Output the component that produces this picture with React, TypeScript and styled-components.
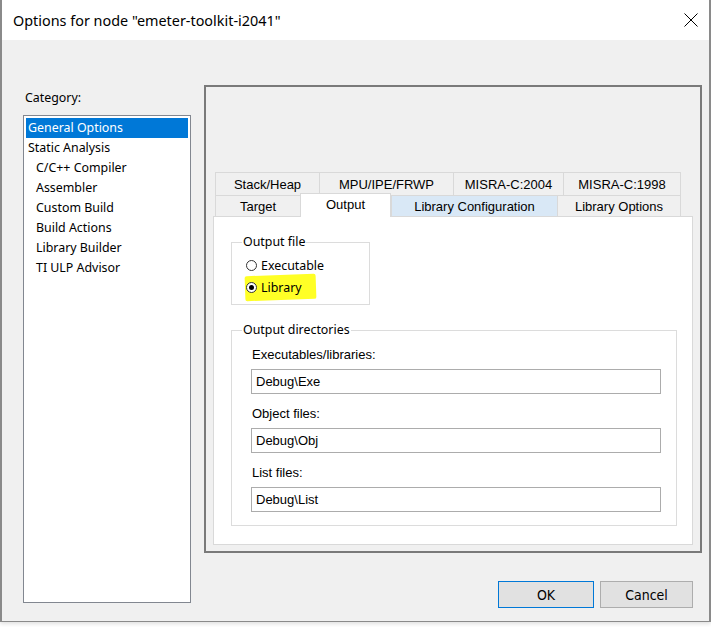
import styled, { createGlobalStyle } from "styled-components";

const UI = '"Noto Sans", "Open Sans", sans-serif';
const SANS = '"Liberation Sans", Arial, sans-serif';

const Global = createGlobalStyle`
  html, body {
    margin:0;
    padding:0;
    background:#ffffff;
  }
  body {
    width:711px;
    height:627px;
    overflow:hidden;
  }
`;

const Window = styled.div`
  width:707px;
  height:621px;
  border-left:2px solid #8a8a8a;
  border-right:2px solid #8a8a8a;
  border-bottom:1px solid #8a8a8a;
  background:#f0f0f0;
  display:flex;
  flex-direction:column;
  box-shadow:0 2px 4px rgba(0,0,0,0.12);
`;

const TitleBar = styled.div`
  height:40px;
  flex-shrink:0;
  background:#ffffff;
  display:flex;
  align-items:center;
  padding-left:11px;
  font-family:${UI};
  font-size:14.4px;
  color:#000;

  >.close {
    margin-left:auto;
    margin-right:11px;
    display:flex;
  }
`;

const Body = styled.div`
  flex:1;
  display:grid;
  grid-template-columns:168px 498px;
  column-gap:13px;
  padding:45px 7px 0 21px;
`;

const LeftCol = styled.div`
  display:flex;
  flex-direction:column;
`;

const CategoryLabel = styled.div`
  margin-top:5px;
  padding-left:2px;
  line-height:16px;
  font-family:${UI};
  font-size:12.4px;
  color:#000;
`;

const ListBox = styled.div`
  margin-top:9px;
  height:488px;
  box-sizing:border-box;
  border:1px solid #828790;
  background:#fff;
  padding:2px;
`;

const ListItem = styled.div<{ $indent?: boolean; $selected?: boolean }>`
  height:20px;
  line-height:20px;
  padding-left:${p => p.$indent ? 10 : 2}px;
  font-family:${UI};
  font-size:12.4px;
  background:${p => p.$selected ? "#0078d7" : "transparent"};
  color:${p => p.$selected ? "#fff" : "#000"};
  white-space:nowrap;
`;

const RightCol = styled.div`
  display:flex;
  flex-direction:column;
`;

const Panel = styled.div`
  height:468px;
  box-sizing:border-box;
  border:2px solid #7a7a7a;
  padding-top:85px;
  display:flex;
  flex-direction:column;
`;

const TabStrip = styled.div`
  margin-left:9px;
  width:466px;
  display:flex;
  flex-direction:column;
`;

const TabRow = styled.div<{ $h: number }>`
  display:flex;
  height:${p => p.$h}px;
`;

const Tab = styled.div<{ $w: number; $active?: boolean; $hot?: boolean; $last?: boolean }>`
  flex-shrink:0;
  width:${p => p.$w}px;
  box-sizing:border-box;
  border-top:1px solid #d9d9d9;
  border-left:1px solid #d9d9d9;
  border-right:${p => p.$last || p.$active ? "1px solid #d9d9d9" : "none"};
  background:${p => p.$active ? "#fff" : p.$hot ? "#d9e8f6" : "#f0f0f0"};
  display:flex;
  align-items:center;
  justify-content:center;
  font-family:${SANS};
  font-size:13px;
  color:#000;
  white-space:nowrap;
  position:relative;
  z-index:${p => p.$active ? 2 : 0};
  margin-top:${p => p.$active ? -2 : 0}px;
  height:${p => p.$active ? "calc(100% + 3px)" : "100%"};
  padding-bottom:${p => p.$active ? 3 : 0}px;
  padding-top:${p => p.$active ? 0 : 1}px;
`;

const Content = styled.div`
  margin-left:7px;
  width:480px;
  height:329px;
  box-sizing:border-box;
  border:1px solid #d9d9d9;
  background:#fff;
  padding:17px 0 0 17px;
  display:flex;
  flex-direction:column;
`;

const Group = styled.fieldset<{ $w: number }>`
  margin:0;
  padding:0;
  width:${p => p.$w}px;
  box-sizing:border-box;
  border:1px solid #dcdcdc;

  &+& {
    margin-top:17px;
  }

  >legend {
    margin-left:10px;
    padding:0 1px;
    line-height:16px;
    font-family:${UI};
    font-size:12.4px;
    color:#000;
  }
`;

const RadioList = styled.div`
  padding:4px 0 6px 14px;
  display:flex;
  flex-direction:column;
`;

const RadioRow = styled.div<{ $marked?: boolean }>`
  height:22px;
  display:flex;
  align-items:center;
  gap:4px;
  font-family:${UI};
  font-size:12.4px;
  color:#000;
  position:relative;
  align-self:flex-start;

  &::before {
    content:"";
    display:${p => p.$marked ? "block" : "none"};
    position:absolute;
    left:-1px;
    top:-1px;
    width:71px;
    height:25px;
    background:#ffff26;
    border-radius:2px;
    transform:rotate(-2deg);
  }

  >* {
    position:relative;
  }
`;

const Radio = styled.span<{ $checked?: boolean }>`
  width:11px;
  height:11px;
  box-sizing:border-box;
  border-radius:50%;
  border:1px solid #333;
  background:#fff;
  display:flex;
  align-items:center;
  justify-content:center;

  &::after {
    content:"";
    width:5px;
    height:5px;
    border-radius:50%;
    background:#000;
    display:${p => p.$checked ? "block" : "none"};
  }
`;

const Fields = styled.div`
  padding:9px 15px 13px 19px;
  display:flex;
  flex-direction:column;
`;

const FieldLabel = styled.div`
  padding-left:1px;
  line-height:16px;
  font-family:${SANS};
  font-size:13px;
  color:#000;
  margin-bottom:6px;

  &:not(:first-child) {
    margin-top:12px;
  }
`;

const PathInput = styled.input`
  width:410px;
  height:25px;
  box-sizing:border-box;
  border:1px solid #acacac;
  padding:0 4px;
  margin:0;
  font-family:${SANS};
  font-size:13px;
  color:#000;
  background:#fff;
  outline:none;
`;

const ButtonRow = styled.div`
  margin-top:28px;
  padding-right:9px;
  display:flex;
  justify-content:flex-end;
  gap:6px;
`;

const Button = styled.button<{ $w: number; $default?: boolean }>`
  width:${p => p.$w}px;
  height:27px;
  margin:0;
  padding:0;
  border:1px solid ${p => p.$default ? "#0078d7" : "#adadad"};
  background:#e1e1e1;
  font-family:"DejaVu Sans Condensed", "DejaVu Sans", sans-serif;
  font-stretch:condensed;
  font-size:14px;
  color:#000;
`;

const categories = [
  { name: "General Options", indent: false },
  { name: "Static Analysis", indent: false },
  { name: "C/C++ Compiler", indent: true },
  { name: "Assembler", indent: true },
  { name: "Custom Build", indent: true },
  { name: "Build Actions", indent: true },
  { name: "Library Builder", indent: true },
  { name: "TI ULP Advisor", indent: true },
];

const backTabs = [
  { name: "Stack/Heap", w: 104 },
  { name: "MPU/IPE/FRWP", w: 134 },
  { name: "MISRA-C:2004", w: 110 },
  { name: "MISRA-C:1998", w: 118 },
];

const frontTabs = [
  { name: "Target", w: 85 },
  { name: "Output", w: 91, active: true },
  { name: "Library Configuration", w: 166, hot: true },
  { name: "Library Options", w: 124 },
];

const dirs = [
  { label: "Executables/libraries:", value: "Debug\\Exe" },
  { label: "Object files:", value: "Debug\\Obj" },
  { label: "List files:", value: "Debug\\List" },
];

const App = () => {
  return (<>
    <Global />
    <Window>
      <TitleBar>
        Options for node "emeter-toolkit-i2041"
        <span className="close">
          <svg width="14" height="14" viewBox="0 0 14 14">
            <path d="M0.5 0.5 L13.5 13.5 M13.5 0.5 L0.5 13.5" stroke="#000" strokeWidth="1" />
          </svg>
        </span>
      </TitleBar>
      <Body>
        <LeftCol>
          <CategoryLabel>Category:</CategoryLabel>
          <ListBox>
            {categories.map((c, i) => (
              <ListItem key={c.name} $indent={c.indent} $selected={i == 0}>{c.name}</ListItem>
            ))}
          </ListBox>
        </LeftCol>
        <RightCol>
          <Panel>
            <TabStrip>
              <TabRow $h={23}>
                {backTabs.map((t, i) => (
                  <Tab key={t.name} $w={t.w} $last={i == backTabs.length - 1}>{t.name}</Tab>
                ))}
              </TabRow>
              <TabRow $h={21}>
                {frontTabs.map((t, i) => (
                  <Tab key={t.name} $w={t.w} $active={t.active} $hot={t.hot} $last={i == frontTabs.length - 1}>{t.name}</Tab>
                ))}
              </TabRow>
            </TabStrip>
            <Content>
              <Group $w={139}>
                <legend>Output file</legend>
                <RadioList>
                  <RadioRow><Radio />Executable</RadioRow>
                  <RadioRow $marked><Radio $checked /><span>Library</span></RadioRow>
                </RadioList>
              </Group>
              <Group $w={446}>
                <legend>Output directories</legend>
                <Fields>
                  {dirs.map(d => (<>
                    <FieldLabel key={d.label}>{d.label}</FieldLabel>
                    <PathInput key={d.value} readOnly value={d.value} />
                  </>))}
                </Fields>
              </Group>
            </Content>
          </Panel>
          <ButtonRow>
            <Button $w={96} $default>OK</Button>
            <Button $w={93}>Cancel</Button>
          </ButtonRow>
        </RightCol>
      </Body>
    </Window>
  </>)
};

export default App;
